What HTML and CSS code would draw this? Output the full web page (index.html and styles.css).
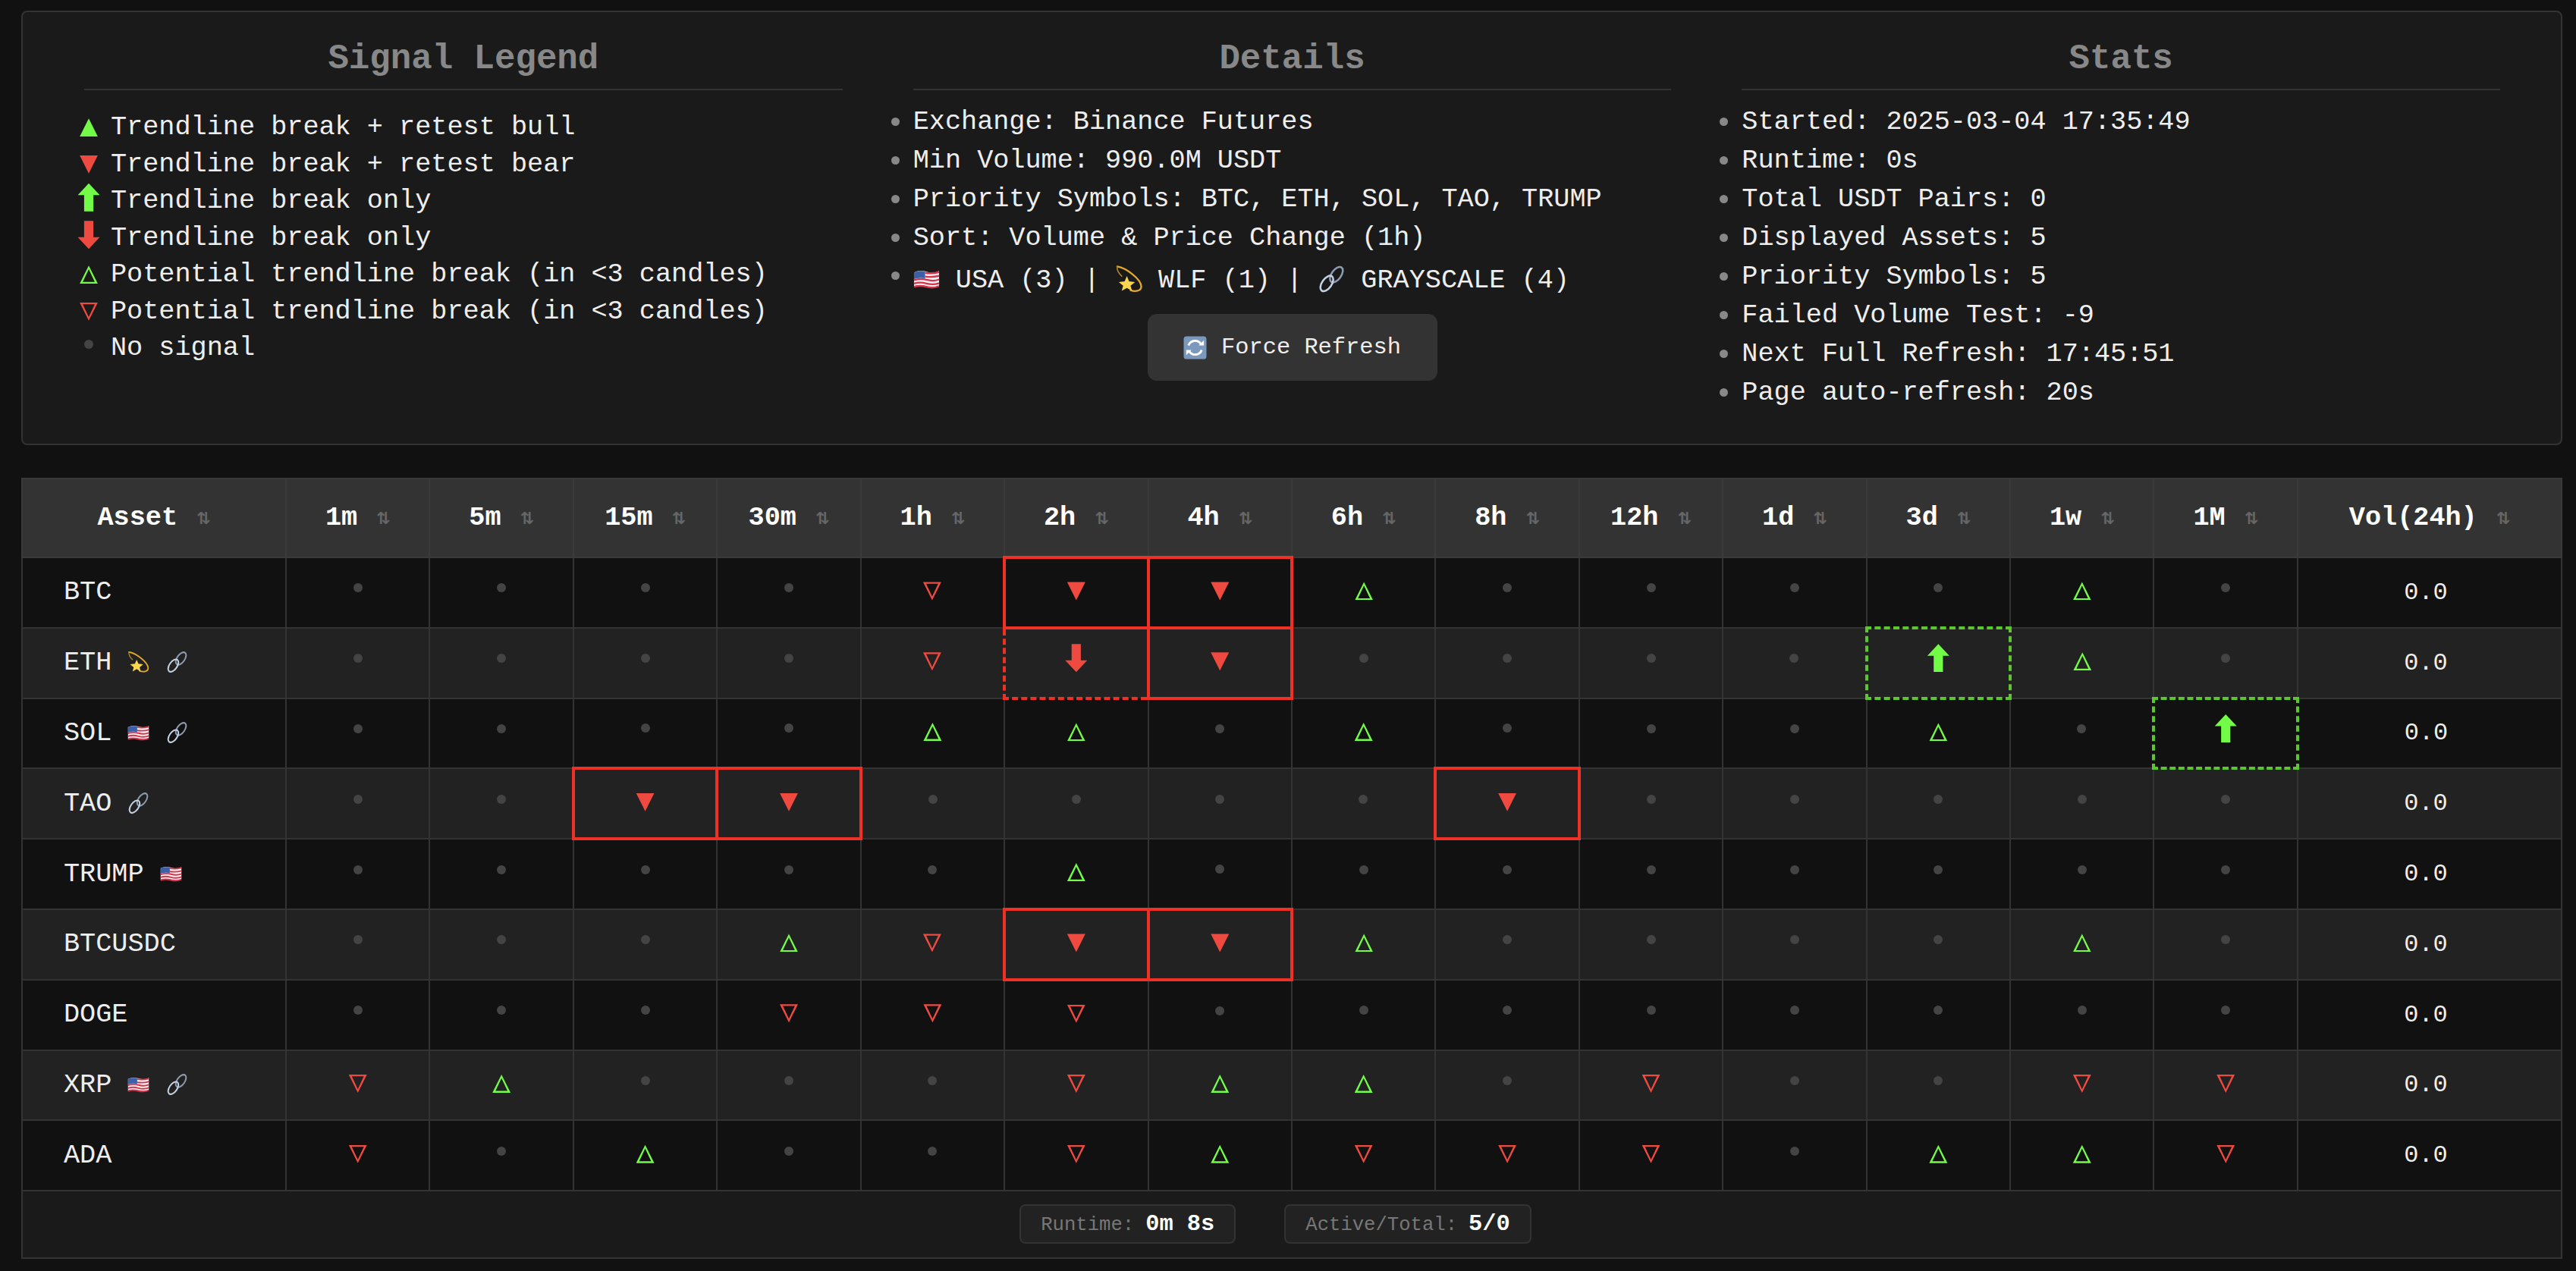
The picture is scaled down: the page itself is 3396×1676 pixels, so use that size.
FILE: index.html
```html
<!DOCTYPE html>
<html lang="en">
<head>
<meta charset="utf-8">
<title>Signal Dashboard</title>
<link rel="stylesheet" href="styles.css">
</head>
<body>
<svg class="defs" aria-hidden="true">
  <symbol id="flag" viewBox="0 0 36 28">
    <path d="M1 5 Q9 1 18 4 T35 3 V23 Q27 27 18 24 T1 25 Z" fill="#f2f2f2"/>
    <g fill="none" stroke="#d8324a" stroke-width="2.4">
      <path d="M16 5.5 Q26 7 35 4.5"/><path d="M16 10.5 Q26 12 35 9.5"/><path d="M1 15.5 Q9 12.5 18 15 T35 14.5"/><path d="M1 20 Q9 17.5 18 20 T35 19.5"/><path d="M1 24.5 Q9 22 18 24.5 T35 23.5"/>
    </g>
    <path d="M1 5 Q8 2 16 3.6 V13 Q8 11.5 1 14 Z" fill="#3c5fa8"/>
  </symbol>
  <symbol id="dizzy" viewBox="0 0 36 36">
    <path d="M2 1 C14 3 34 18 34.5 28 C34.5 34.5 26 35.5 20 33" fill="none" stroke="#e2a92a" stroke-width="2.4" stroke-linecap="round"/>
    <path d="M2 1 C1 5 4 10 8 14" fill="none" stroke="#b98a24" stroke-width="1.6" stroke-linecap="round"/>
    <path d="M15 14 L18 21 L26 22 L20 27 L22 34 L15 30 L8 34 L10 27 L4 22 L12 21 Z" fill="#fcd54e"/>
  </symbol>
  <symbol id="link" viewBox="0 0 36 36">
    <g fill="none" stroke-width="2.6">
      <ellipse cx="24.5" cy="12" rx="6.5" ry="12" transform="rotate(35 24.5 12)" stroke="#8d9bb0"/>
      <ellipse cx="11.5" cy="24" rx="6.5" ry="12" transform="rotate(35 11.5 24)" stroke="#c4d2e2"/>
    </g>
  </symbol>
  <symbol id="refresh" viewBox="0 0 32 32">
    <rect x="0.5" y="0.5" width="31" height="31" rx="4" fill="#7a99bd"/>
    <g fill="none" stroke="#fff" stroke-width="3">
      <path d="M7 13 A9.5 9.5 0 0 1 24 11"/><path d="M25 19 A9.5 9.5 0 0 1 8 21"/>
    </g>
    <path d="M21 13 H28 V6 Z M11 19 H4 V26 Z" fill="#fff"/>
  </symbol>
</svg>

<section class="panel">
  <div class="col">
    <h2 class="col-title">Signal Legend</h2>
    <ul class="legend">
      <li class="legend-row"><span class="lg-icon"><span class="s fu lg-t"></span></span>Trendline break + retest bull</li>
      <li class="legend-row"><span class="lg-icon"><span class="s fd lg-t"></span></span>Trendline break + retest bear</li>
      <li class="legend-row"><span class="lg-icon"><span class="s au lg-a"></span></span>Trendline break only</li>
      <li class="legend-row"><span class="lg-icon"><span class="s ad lg-a"></span></span>Trendline break only</li>
      <li class="legend-row"><span class="lg-icon"><span class="s hu lg-t"></span></span>Potential trendline break (in &lt;3 candles)</li>
      <li class="legend-row"><span class="lg-icon"><span class="s hd lg-t"></span></span>Potential trendline break (in &lt;3 candles)</li>
      <li class="legend-row"><span class="lg-icon"><span class="s no lg-n"></span></span>No signal</li>
    </ul>
  </div>
  <div class="col">
    <h2 class="col-title">Details</h2>
    <ul class="info">
      <li>Exchange: Binance Futures</li>
      <li>Min Volume: 990.0M USDT</li>
      <li>Priority Symbols: BTC, ETH, SOL, TAO, TRUMP</li>
      <li>Sort: Volume &amp; Price Change (1h)</li>
      <li class="tags"><span><svg class="em flag-lg"><use href="#flag"/></svg> USA (3) | <svg class="em"><use href="#dizzy"/></svg> WLF (1) | <svg class="em"><use href="#link"/></svg> GRAYSCALE (4)</span></li>
    </ul>
    <div class="btn-row"><button class="refresh" type="button"><svg class="refresh-ic"><use href="#refresh"/></svg>Force Refresh</button></div>
  </div>
  <div class="col">
    <h2 class="col-title">Stats</h2>
    <ul class="info">
      <li>Started: 2025-03-04 17:35:49</li>
      <li>Runtime: 0s</li>
      <li>Total USDT Pairs: 0</li>
      <li>Displayed Assets: 5</li>
      <li>Priority Symbols: 5</li>
      <li>Failed Volume Test: -9</li>
      <li>Next Full Refresh: 17:45:51</li>
      <li>Page auto-refresh: 20s</li>
    </ul>
  </div>
</section>

<section class="board">
  <table class="grid">
    <colgroup><col class="c-wide"><col span="14"><col class="c-wide"></colgroup>
    <thead>
      <tr>
        <th>Asset<span class="sort">⇅</span></th><th>1m<span class="sort">⇅</span></th><th>5m<span class="sort">⇅</span></th><th>15m<span class="sort">⇅</span></th><th>30m<span class="sort">⇅</span></th><th>1h<span class="sort">⇅</span></th><th>2h<span class="sort">⇅</span></th><th>4h<span class="sort">⇅</span></th><th>6h<span class="sort">⇅</span></th><th>8h<span class="sort">⇅</span></th><th>12h<span class="sort">⇅</span></th><th>1d<span class="sort">⇅</span></th><th>3d<span class="sort">⇅</span></th><th>1w<span class="sort">⇅</span></th><th>1M<span class="sort">⇅</span></th><th>Vol(24h)<span class="sort">⇅</span></th>
      </tr>
    </thead>
    <tbody>
      <tr>
        <td class="asset">BTC</td>
        <td><i class="s no"></i></td><td><i class="s no"></i></td><td><i class="s no"></i></td><td><i class="s no"></i></td><td><i class="s hd"></i></td><td class="hl-red"><i class="s fd"></i></td><td class="hl-red"><i class="s fd"></i></td><td><i class="s hu"></i></td><td><i class="s no"></i></td><td><i class="s no"></i></td><td><i class="s no"></i></td><td><i class="s no"></i></td><td><i class="s hu"></i></td><td><i class="s no"></i></td>
        <td class="vol">0.0</td>
      </tr>
      <tr>
        <td class="asset">ETH <svg class="em-sm"><use href="#dizzy"/></svg> <svg class="em-sm"><use href="#link"/></svg></td>
        <td><i class="s no"></i></td><td><i class="s no"></i></td><td><i class="s no"></i></td><td><i class="s no"></i></td><td><i class="s hd"></i></td><td class="ds-red"><i class="s ad"></i></td><td class="hl-red"><i class="s fd"></i></td><td><i class="s no"></i></td><td><i class="s no"></i></td><td><i class="s no"></i></td><td><i class="s no"></i></td><td class="ds-green"><i class="s au"></i></td><td><i class="s hu"></i></td><td><i class="s no"></i></td>
        <td class="vol">0.0</td>
      </tr>
      <tr>
        <td class="asset">SOL <svg class="em-sm"><use href="#flag"/></svg> <svg class="em-sm"><use href="#link"/></svg></td>
        <td><i class="s no"></i></td><td><i class="s no"></i></td><td><i class="s no"></i></td><td><i class="s no"></i></td><td><i class="s hu"></i></td><td><i class="s hu"></i></td><td><i class="s no"></i></td><td><i class="s hu"></i></td><td><i class="s no"></i></td><td><i class="s no"></i></td><td><i class="s no"></i></td><td><i class="s hu"></i></td><td><i class="s no"></i></td><td class="ds-green"><i class="s au"></i></td>
        <td class="vol">0.0</td>
      </tr>
      <tr>
        <td class="asset">TAO <svg class="em-sm"><use href="#link"/></svg></td>
        <td><i class="s no"></i></td><td><i class="s no"></i></td><td class="hl-red"><i class="s fd"></i></td><td class="hl-red"><i class="s fd"></i></td><td><i class="s no"></i></td><td><i class="s no"></i></td><td><i class="s no"></i></td><td><i class="s no"></i></td><td class="hl-red"><i class="s fd"></i></td><td><i class="s no"></i></td><td><i class="s no"></i></td><td><i class="s no"></i></td><td><i class="s no"></i></td><td><i class="s no"></i></td>
        <td class="vol">0.0</td>
      </tr>
      <tr>
        <td class="asset">TRUMP <svg class="em-sm"><use href="#flag"/></svg></td>
        <td><i class="s no"></i></td><td><i class="s no"></i></td><td><i class="s no"></i></td><td><i class="s no"></i></td><td><i class="s no"></i></td><td><i class="s hu"></i></td><td><i class="s no"></i></td><td><i class="s no"></i></td><td><i class="s no"></i></td><td><i class="s no"></i></td><td><i class="s no"></i></td><td><i class="s no"></i></td><td><i class="s no"></i></td><td><i class="s no"></i></td>
        <td class="vol">0.0</td>
      </tr>
      <tr>
        <td class="asset">BTCUSDC</td>
        <td><i class="s no"></i></td><td><i class="s no"></i></td><td><i class="s no"></i></td><td><i class="s hu"></i></td><td><i class="s hd"></i></td><td class="hl-red"><i class="s fd"></i></td><td class="hl-red"><i class="s fd"></i></td><td><i class="s hu"></i></td><td><i class="s no"></i></td><td><i class="s no"></i></td><td><i class="s no"></i></td><td><i class="s no"></i></td><td><i class="s hu"></i></td><td><i class="s no"></i></td>
        <td class="vol">0.0</td>
      </tr>
      <tr>
        <td class="asset">DOGE</td>
        <td><i class="s no"></i></td><td><i class="s no"></i></td><td><i class="s no"></i></td><td><i class="s hd"></i></td><td><i class="s hd"></i></td><td><i class="s hd"></i></td><td><i class="s no"></i></td><td><i class="s no"></i></td><td><i class="s no"></i></td><td><i class="s no"></i></td><td><i class="s no"></i></td><td><i class="s no"></i></td><td><i class="s no"></i></td><td><i class="s no"></i></td>
        <td class="vol">0.0</td>
      </tr>
      <tr>
        <td class="asset">XRP <svg class="em-sm"><use href="#flag"/></svg> <svg class="em-sm"><use href="#link"/></svg></td>
        <td><i class="s hd"></i></td><td><i class="s hu"></i></td><td><i class="s no"></i></td><td><i class="s no"></i></td><td><i class="s no"></i></td><td><i class="s hd"></i></td><td><i class="s hu"></i></td><td><i class="s hu"></i></td><td><i class="s no"></i></td><td><i class="s hd"></i></td><td><i class="s no"></i></td><td><i class="s no"></i></td><td><i class="s hd"></i></td><td><i class="s hd"></i></td>
        <td class="vol">0.0</td>
      </tr>
      <tr>
        <td class="asset">ADA</td>
        <td><i class="s hd"></i></td><td><i class="s no"></i></td><td><i class="s hu"></i></td><td><i class="s no"></i></td><td><i class="s no"></i></td><td><i class="s hd"></i></td><td><i class="s hu"></i></td><td><i class="s hd"></i></td><td><i class="s hd"></i></td><td><i class="s hd"></i></td><td><i class="s no"></i></td><td><i class="s hu"></i></td><td><i class="s hu"></i></td><td><i class="s hd"></i></td>
        <td class="vol">0.0</td>
      </tr>
    </tbody>
  </table>
  <footer class="foot">
    <div class="badge"><span class="badge-label">Runtime:</span><span class="badge-value">0m 8s</span></div>
    <div class="badge"><span class="badge-label">Active/Total:</span><span class="badge-value">5/0</span></div>
  </footer>
</section>
</body>
</html>
```

FILE: styles.css
```css
* { box-sizing: border-box; }
html, body { margin: 0; padding: 0; }
body {
  background: #111;
  color: #eee;
  font-family: "Liberation Mono", "Courier New", monospace;
  font-size: 35.2px;
  padding: 14px 18px 14px 28px;
}
.defs { position: absolute; width: 0; height: 0; }

.panel {
  display: flex;
  gap: 93px;
  background: #1a1a1a;
  border: 2px solid #333;
  border-radius: 8px;
  padding: 36px 80px 42px 81px;
}
.col { flex: 1 1 0; min-width: 0; }
.col-title {
  margin: 0;
  padding-bottom: 13px;
  border-bottom: 2px solid #333;
  color: #888;
  font-size: 45.76px;
  font-weight: 700;
  line-height: 52px;
  text-align: center;
}

.legend, .info { list-style: none; margin: 0; padding: 0; }
.legend { margin-top: 25px; }
.info { margin-top: 16px; }

.legend-row { display: flex; align-items: center; height: 48.5px; line-height: 40px; }
.lg-icon { display: flex; justify-content: center; align-items: center; flex: none; width: 30px; margin-left: -9px; margin-right: 14px; }

.info li { display: flex; align-items: center; height: 51px; line-height: 40px; }
.info li::before {
  content: "";
  flex: none;
  width: 11px;
  height: 11px;
  margin-left: -29px;
  margin-right: 18px;
  border-radius: 50%;
  background: #888;
}
.info li.tags { height: 61px; white-space: nowrap; }
.info li.tags::before { margin-bottom: 12px; }

.em { width: 35px; height: 36px; vertical-align: -7px; }
.em.flag-lg { height: 28px; vertical-align: -3px; }
.em-sm { width: 29px; height: 28px; vertical-align: -4px; }

.btn-row { display: flex; justify-content: center; margin-top: 14px; }
.refresh {
  display: flex;
  align-items: center;
  justify-content: center;
  gap: 19px;
  width: 382px;
  height: 88px;
  border: 0;
  border-radius: 12px;
  background: #333;
  color: #eee;
  font-family: inherit;
  font-size: 30.4px;
}
.refresh-ic { width: 31px; height: 31px; flex: none; }

/* signal shapes */
.s { display: block; margin: 0 auto; font-style: normal; }
.no { width: 12px; height: 12px; border-radius: 50%; background: #444; margin-bottom: 12px; }
.fu, .fd, .hu, .hd { width: 24px; height: 24px; margin-bottom: 4px; }
.fu { background: #72fb47; clip-path: polygon(50% 0, 100% 100%, 0 100%); }
.fd { background: #ef4a40; clip-path: polygon(0 0, 100% 0, 50% 100%); }
.hu { background: #72fb47; clip-path: polygon(evenodd, 50% 0, 100% 100%, 0 100%, 50% 0, 50% 20%, 17% 90%, 83% 90%, 50% 20%); }
.hd { background: #ef4a40; clip-path: polygon(evenodd, 0 0, 100% 0, 50% 100%, 0 0, 17% 10%, 50% 80%, 83% 10%, 17% 10%); }
.au, .ad { width: 29px; height: 37px; margin-bottom: 13px; }
.au { background: #72fb47; clip-path: polygon(50% 0, 100% 42%, 71% 42%, 71% 100%, 29% 100%, 29% 42%, 0 42%); }
.ad { background: #ef4a40; clip-path: polygon(29% 0, 71% 0, 71% 58%, 100% 58%, 50% 100%, 0 58%, 29% 58%); }

.lg-t { margin: 0; }
.lg-a { margin: -10px 0 0; }
.lg-n { margin: -10px 0 0; background: #444; }
.legend-row:nth-child(4) .lg-a { margin-top: -8px; }

/* table */
.board {
  margin-top: 43px;
  background: #1a1a1a;
}
.grid {
  width: 100%;
  table-layout: fixed;
  border-collapse: collapse;
  font-size: 35.2px;
}
.c-wide { width: 348px; }
th, td { border: 2px solid #333; padding: 0; text-align: center; vertical-align: middle; }
th {
  height: 104px;
  background: #333;
  border-color: #3a3a3a;
  color: #fff;
  font-weight: 700;
  white-space: nowrap;
}
td { height: 92.8px; }
tbody tr:nth-child(odd) td { background: #111; }
tbody tr:nth-child(even) td { background: #222; }
.sort {
  display: inline-block;
  margin-left: 25px;
  color: #666;
  font-family: "DejaVu Sans", sans-serif;
  font-size: 22px;
  font-weight: 700;
  vertical-align: 1px;
}
td.asset { padding-left: 54px; text-align: left; white-space: nowrap; }
td.vol { font-size: 32px; padding-right: 10px; }
td.hl-red { border: 4px solid #ee3124; }
td.ds-red { border: 4px dashed #ee3124; }
td.ds-green { border: 4px dashed #5cc52f; }

.foot {
  display: flex;
  justify-content: center;
  gap: 64px;
  padding: 17px 43px 18px 0;
  border: 2px solid #333;
  border-top: 0;
}
.badge {
  display: flex;
  align-items: baseline;
  gap: 15px;
  height: 52px;
  padding: 0 26px;
  border: 2px solid #333;
  border-radius: 8px;
  background: #222;
  line-height: 48px;
}
.badge-label { color: #777; font-size: 25.6px; }
.badge-value { color: #fff; font-size: 30.4px; font-weight: 700; }
```
